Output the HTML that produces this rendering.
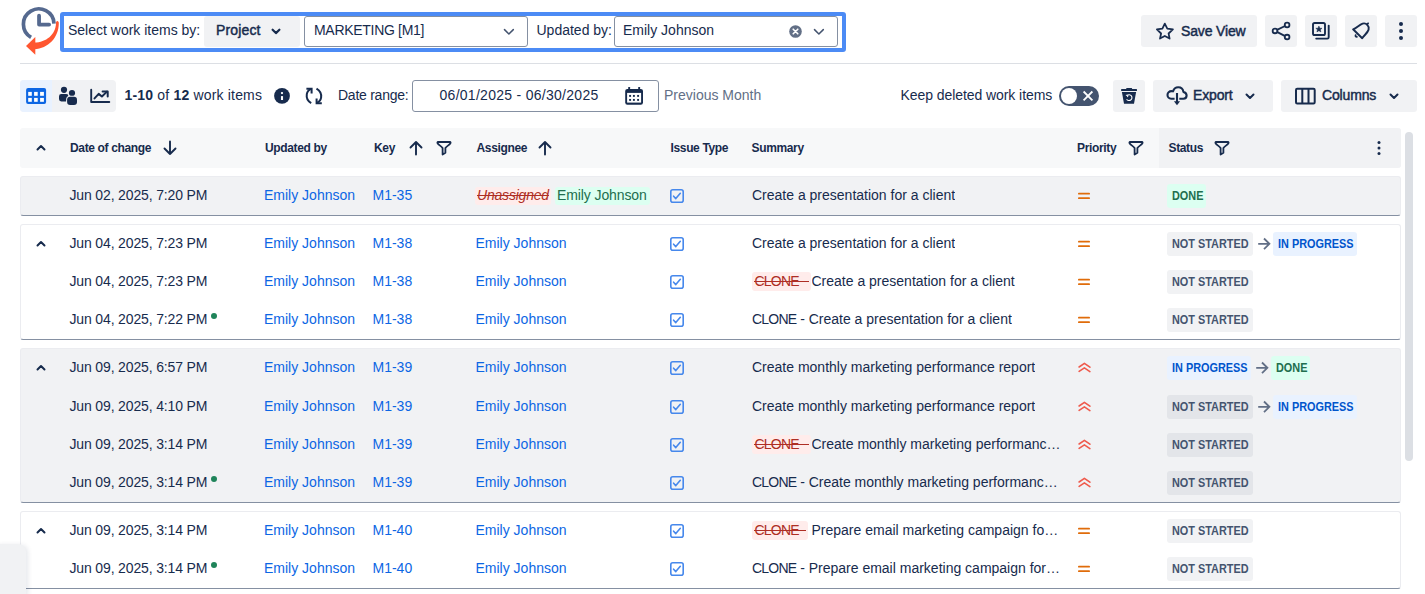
<!DOCTYPE html>
<html><head><meta charset="utf-8">
<style>
*{box-sizing:border-box;margin:0;padding:0}
html,body{width:1425px;height:594px;overflow:hidden;background:#fff}
body{font-family:"Liberation Sans",sans-serif;font-size:14px;color:#172b4d;position:relative}
.a{position:absolute}
.t{position:absolute;white-space:nowrap;line-height:38px;height:38px}
svg{position:absolute;overflow:visible}
.btn{position:absolute;background:#f1f2f4;border-radius:3px;height:32px}
.bold{font-weight:700}
.med{-webkit-text-stroke:0.45px currentColor;letter-spacing:-0.15px}
.lnk{color:#0c66e4}
.grp{position:absolute;left:20px;width:1381px;border:1px solid #ebecf0;border-bottom:1px solid #8590a2;border-radius:3px}
.gray{background:#f1f2f4}
.row{position:absolute;left:0;width:1381px;height:38px}
.loz{position:absolute;height:24px;line-height:24px;border-radius:3px;font-size:12.5px;font-weight:700;white-space:nowrap;overflow:visible}
.loz span{position:absolute;left:4.5px;top:0;transform:scaleX(0.87);transform-origin:0 0}
.ns{background:rgba(9,30,66,0.06);color:#44546f}
.ip{background:#e9f2ff;color:#0055cc}
.dn{background:#dcfff1;color:#216e4e}
.hdr{font-size:12px;font-weight:700;letter-spacing:-0.35px;line-height:40px;height:40px}
</style></head><body>

<!-- logo -->
<svg class="a" style="left:0;top:0" width="70" height="60" viewBox="0 0 70 60">
  <path d="M31.05 37.45 A15.3 15.3 0 1 1 54 23.6" fill="none" stroke="#55698f" stroke-width="3.7"/>
  <path d="M39.05 15.7 V24.55 H49.1" fill="none" stroke="#55698f" stroke-width="3.8" stroke-linecap="round" stroke-linejoin="round"/>
  <path d="M57.3 21 C58.3 21 58.8 22 58.8 23 C58.8 38 48 48.5 34.5 49.2 L34.5 42.6 C46 42.2 55.8 35 56 23 C56 22 56.4 21 57.3 21 Z" fill="#ff5630"/>
  <path d="M26 46 L35.3 37.1 L35.3 54.8 Z" fill="#ff5630"/>
</svg>

<!-- filter bar -->
<div class="a" style="left:60px;top:12px;width:786px;height:40px;border:4px solid #4c8bf5;border-radius:3px"></div>
<div class="t" style="left:68px;top:11px">Select work items by:</div>
<div class="btn" style="left:204px;top:16px;width:96px;height:30.5px"></div>
<div class="t med" style="left:216px;top:11px;letter-spacing:0.15px">Project</div>
<svg style="left:271px;top:28px" width="10" height="8"><path d="M1.6 1.7 L4.9 5.1 L8.4 1.7" fill="none" stroke="#172b4d" stroke-width="2.2" stroke-linecap="round" stroke-linejoin="round"/></svg>
<div class="a" style="left:304px;top:16px;width:224px;height:31px;border:1px solid #8590a2;border-radius:3px"></div>
<div class="t" style="left:314px;top:11px;letter-spacing:-0.3px">MARKETING [M1]</div>
<svg style="left:504px;top:27px" width="12" height="9"><path d="M0.5 2.6 L4.9 7 L9.3 2.6" fill="none" stroke="#44546f" stroke-width="1.5" stroke-linecap="round" stroke-linejoin="round"/></svg>
<div class="t" style="left:536.5px;top:11px">Updated by:</div>
<div class="a" style="left:614px;top:16px;width:224px;height:31px;border:1px solid #8590a2;border-radius:3px"></div>
<div class="t" style="left:623px;top:11px">Emily Johnson</div>
<svg style="left:788.5px;top:24.5px" width="13" height="13" viewBox="0 0 13 13"><circle cx="6.5" cy="6.5" r="6.3" fill="#626f86"/><path d="M4.2 4.2 L8.8 8.8 M8.8 4.2 L4.2 8.8" stroke="#fff" stroke-width="1.6" stroke-linecap="round"/></svg>
<svg style="left:813.5px;top:27px" width="12" height="9"><path d="M0.5 2.6 L4.9 7 L9.3 2.6" fill="none" stroke="#44546f" stroke-width="1.5" stroke-linecap="round" stroke-linejoin="round"/></svg>

<!-- top-right buttons -->
<div class="btn" style="left:1141px;top:15px;width:116px"></div>
<svg style="left:1155px;top:21px" width="20" height="20" viewBox="0 0 20 20"><path d="M9.8 2.6 L12.3 7.6 L17.9 8.4 L13.6 12.5 L14.6 17.6 L9.8 15 L5 17.6 L6.1 12.5 L1.9 8.4 L7.4 7.6 Z" fill="none" stroke="#172b4d" stroke-width="1.75" stroke-linejoin="round"/></svg>
<div class="t med" style="left:1181px;top:11.5px">Save View</div>
<div class="btn" style="left:1265px;top:15px;width:32px"></div>
<svg style="left:1270px;top:20px" width="22" height="22" viewBox="0 0 22 22"><path d="M5 10.9 L17.1 5 M5 10.9 L17.1 17.1" stroke="#172b4d" stroke-width="1.8"/><circle cx="5" cy="10.9" r="2.35" fill="#f1f2f4" stroke="#172b4d" stroke-width="1.8"/><circle cx="17.1" cy="5" r="2.35" fill="#f1f2f4" stroke="#172b4d" stroke-width="1.8"/><circle cx="17.1" cy="17.1" r="2.35" fill="#f1f2f4" stroke="#172b4d" stroke-width="1.8"/></svg>
<div class="btn" style="left:1305px;top:15px;width:32px"></div>
<svg style="left:1310px;top:20px" width="22" height="22" viewBox="0 0 22 22"><rect x="3" y="3" width="12" height="12" rx="1.6" fill="none" stroke="#172b4d" stroke-width="1.9"/><path d="M18.7 5.6 V17.2 Q18.7 18.6 17.3 18.6 H6.2" fill="none" stroke="#172b4d" stroke-width="1.9" stroke-linecap="round"/><path d="M8.9 6.1 L9.8 8.2 L12 8.3 L10.3 9.7 L10.9 11.9 L8.9 10.7 L6.9 11.9 L7.5 9.7 L5.8 8.3 L8 8.2 Z" fill="#172b4d" stroke="#172b4d" stroke-width="0.5" stroke-linejoin="round"/></svg>
<div class="btn" style="left:1345px;top:15px;width:32px"></div>
<svg style="left:1350px;top:20px" width="22" height="22" viewBox="0 0 22 22"><path d="M3.1 9.3 C6.5 8.2 9.3 4.6 12.6 3.6 C14.4 3.1 16.2 3.7 17.3 4.9 C18.5 6.1 19 7.8 18.6 9.6 C17.6 12.9 14 15.4 12.2 18.3 Z" fill="none" stroke="#172b4d" stroke-width="1.9" stroke-linejoin="round"/><path d="M17 4.4 L18.1 3.3" stroke="#172b4d" stroke-width="1.8" stroke-linecap="round"/><path d="M5.6 15.2 Q5.2 17 6.9 16.9" fill="none" stroke="#172b4d" stroke-width="1.8" stroke-linecap="round"/></svg>
<div class="btn" style="left:1385px;top:15px;width:32px"></div>
<svg style="left:1385px;top:15px" width="32" height="32"><circle cx="16" cy="8.9" r="2" fill="#172b4d"/><circle cx="16" cy="15.9" r="2" fill="#172b4d"/><circle cx="16" cy="22.9" r="2" fill="#172b4d"/></svg>

<div class="a" style="left:20px;top:63px;width:1397px;height:1px;background:#dcdfe4"></div>

<!-- toolbar -->
<div class="btn" style="left:20px;top:80px;width:96px;border-radius:4px"></div>
<div class="a" style="left:20px;top:80px;width:32px;height:32px;background:#e9f2ff;border-radius:4px 0 0 4px"></div>
<svg style="left:26px;top:88px" width="21" height="16" viewBox="0 0 21 16"><rect x="0.1" y="0.1" width="20" height="15.8" rx="2" fill="#0c66e4"/><g fill="#fff"><rect x="2.2" y="3.9" width="3.6" height="3.9"/><rect x="8.1" y="3.9" width="3.6" height="3.9"/><rect x="14.1" y="3.9" width="3.8" height="3.9"/><rect x="2.2" y="9.9" width="3.6" height="3.9"/><rect x="8.1" y="9.9" width="3.6" height="3.9"/><rect x="14.1" y="9.9" width="3.8" height="3.9"/></g></svg>
<svg style="left:58px;top:86px" width="20" height="20" viewBox="0 0 20 20"><circle cx="6" cy="3.8" r="3.1" fill="#172b4d"/><rect x="1" y="8" width="9.5" height="7.4" rx="2.3" fill="#172b4d"/><circle cx="14" cy="7" r="3.1" fill="#172b4d" stroke="#f1f2f4" stroke-width="2" paint-order="stroke"/><rect x="9.1" y="10.8" width="9.9" height="8.1" rx="3" fill="#172b4d" stroke="#f1f2f4" stroke-width="2" paint-order="stroke"/></svg>
<svg style="left:88px;top:86px" width="24" height="20" viewBox="0 0 24 20"><path d="M3.2 3.7 V16 H21.3" fill="none" stroke="#172b4d" stroke-width="1.9" stroke-linecap="round" stroke-linejoin="round"/><path d="M6.5 12.4 L10.7 7.9 L13.9 10.5 L19 5.6" fill="none" stroke="#172b4d" stroke-width="2" stroke-linecap="round" stroke-linejoin="round"/><path d="M14.6 5.6 H19.7 V10.5" fill="none" stroke="#172b4d" stroke-width="2" stroke-linecap="round" stroke-linejoin="round"/></svg>
<div class="t" style="left:124.5px;top:76px;letter-spacing:0.18px"><b>1-10</b> of <b>12</b> work items</div>
<svg style="left:274px;top:88px" width="16" height="16" viewBox="0 0 16 16"><circle cx="8" cy="7.9" r="7.9" fill="#172b4d"/><circle cx="8" cy="5.1" r="1.15" fill="#fff"/><rect x="6.95" y="8.1" width="2.1" height="3.9" fill="#fff"/></svg>
<svg style="left:304px;top:86px" width="20" height="20" viewBox="0 0 20 20"><g fill="none" stroke="#172b4d" stroke-width="2"><path d="M7.2 17.2 C3.8 15.2 2.3 11.5 2.8 8.2 C3.2 5.8 4.8 3.8 7.3 2.9"/><path d="M2.4 2.8 H7.6 V7.6"/><path d="M12.5 2.6 C15.9 4.6 17.6 8.3 17.1 11.6 C16.7 14 15.1 16 12.6 16.9"/><path d="M17.8 17.3 H12.6 V12.4"/></g></svg>
<div class="t" style="left:338px;top:76px;letter-spacing:-0.25px">Date range:</div>
<div class="a" style="left:412px;top:80px;width:247px;height:32px;border:1px solid #8590a2;border-radius:3px"></div>
<div class="t" style="left:439.5px;top:76px;letter-spacing:0.28px">06/01/2025 - 06/30/2025</div>
<svg style="left:625px;top:86px" width="19" height="20" viewBox="0 0 19 20"><rect x="0.2" y="2.9" width="17.8" height="15.9" rx="2.2" fill="#172b4d"/><rect x="3.2" y="1" width="1.9" height="3" rx="0.5" fill="#172b4d"/><rect x="13.2" y="1" width="1.9" height="3" rx="0.5" fill="#172b4d"/><rect x="2.1" y="6.9" width="14" height="9.7" fill="#fff"/><g fill="#172b4d"><rect x="4.15" y="8.95" width="1.9" height="1.9"/><rect x="7.95" y="8.95" width="1.9" height="1.9"/><rect x="12.15" y="8.95" width="1.9" height="1.9"/><rect x="4.15" y="12.95" width="1.9" height="1.9"/><rect x="7.95" y="12.95" width="1.9" height="1.9"/><rect x="12.15" y="12.95" width="1.9" height="1.9"/></g></svg>
<div class="t" style="left:664px;top:76px;color:#626f86">Previous Month</div>

<div class="t" style="left:900.5px;top:76px;letter-spacing:-0.07px">Keep deleted work items</div>
<div class="a" style="left:1059px;top:86px;width:40px;height:20px;border-radius:10px;background:#44546f"></div>
<div class="a" style="left:1061px;top:88px;width:16px;height:16px;border-radius:8px;background:#fff"></div>
<svg style="left:1082px;top:90px" width="12" height="12"><path d="M1.6 1.5 L10.4 10.4 M10.4 1.5 L1.6 10.4" stroke="#fff" stroke-width="1.8"/></svg>
<div class="btn" style="left:1113px;top:80px;width:32px"></div>
<svg style="left:1119px;top:86px" width="20" height="20" viewBox="0 0 20 20"><rect x="2.1" y="2.9" width="15.9" height="2" rx="0.5" fill="#172b4d"/><rect x="7.2" y="2" width="5.9" height="1.5" rx="0.4" fill="#172b4d"/><path d="M2.9 6.1 H17.1 L15 17.7 H5 Z" fill="#172b4d"/><path d="M8.2 9.4 A2.9 2.9 0 1 1 7.6 13.2" fill="none" stroke="#fff" stroke-width="1.1"/><path d="M6.9 9.3 L8.8 9.3 L8.6 11.1" fill="none" stroke="#fff" stroke-width="1"/></svg>
<div class="btn" style="left:1153px;top:80px;width:120px"></div>
<svg style="left:1163px;top:82px" width="28" height="28" viewBox="0 0 28 28"><path d="M11.6 16.7 H8.2 C6 16.7 4.5 15 4.5 13 C4.5 10.8 6.3 9.1 8.5 9.1 C9 9.1 9.6 9.2 10 9.4 C10.8 6.9 12.8 5.3 15.2 5.3 C18 5.3 20.1 7.3 20.4 10 C22.2 10.4 23.6 11.8 23.6 13.5 C23.6 15.3 22.2 16.7 20.4 16.7 H16.3" fill="none" stroke="#172b4d" stroke-width="2.1" stroke-linejoin="round"/><path d="M14 11 V20" stroke="#172b4d" stroke-width="2.1"/><path d="M10.9 19.3 H17.1 L14 23.2 Z" fill="#172b4d"/></svg>
<div class="t med" style="left:1193px;top:76px">Export</div>
<svg style="left:1244.5px;top:93px" width="10" height="8"><path d="M1.5 1.5 L5 5 L8.5 1.5" fill="none" stroke="#172b4d" stroke-width="2" stroke-linecap="round" stroke-linejoin="round"/></svg>
<div class="btn" style="left:1281px;top:80px;width:136px"></div>
<svg style="left:1295px;top:87px" width="21" height="18" viewBox="0 0 21 18"><rect x="1" y="1.8" width="18.7" height="14.7" rx="1.2" fill="none" stroke="#172b4d" stroke-width="2"/><path d="M7.3 1.8 V16.5 M13.5 1.8 V16.5" stroke="#172b4d" stroke-width="2"/></svg>
<div class="t med" style="left:1322px;top:76px">Columns</div>
<svg style="left:1388.5px;top:93px" width="10" height="8"><path d="M1.5 1.5 L5 5 L8.5 1.5" fill="none" stroke="#172b4d" stroke-width="2" stroke-linecap="round" stroke-linejoin="round"/></svg>

<!-- TABLE HEADER -->
<div class="a" style="left:20px;top:128px;width:1381px;height:40px;background:#f7f8f9;border-radius:3px"></div>
<div class="a" style="left:1159px;top:128px;width:242px;height:40px;background:#f1f2f4;border-radius:0 3px 3px 0"></div>
<svg style="left:36px;top:144px" width="10" height="8"><path d="M1.5 5.5 L5 2 L8.5 5.5" fill="none" stroke="#172b4d" stroke-width="2" stroke-linecap="round" stroke-linejoin="round"/></svg>
<div class="t hdr" style="left:70px;top:128px">Date of change</div>
<svg style="left:162px;top:140px" width="16" height="16" viewBox="0 0 16 16"><path d="M8 1.5 V14 M2.5 8.5 L8 14 L13.5 8.5" fill="none" stroke="#172b4d" stroke-width="1.9" stroke-linecap="round" stroke-linejoin="round"/></svg>
<div class="t hdr" style="left:265px;top:128px">Updated by</div>
<div class="t hdr" style="left:374px;top:128px">Key</div>
<svg style="left:408px;top:140px" width="16" height="16" viewBox="0 0 16 16"><path d="M8 14.5 V2 M2.5 7.5 L8 2 L13.5 7.5" fill="none" stroke="#172b4d" stroke-width="1.9" stroke-linecap="round" stroke-linejoin="round"/></svg>
<svg style="left:436px;top:140px" width="16" height="16" viewBox="0 0 16 16"><path d="M2 2 H14 C14.6 2 14.8 2.7 14.4 3.3 C13.4 5 10.6 6.2 9.4 8 V12.7 L6.6 14.5 V8 C5.4 6.2 2.6 5 1.6 3.3 C1.2 2.7 1.4 2 2 2 Z" fill="none" stroke="#172b4d" stroke-width="1.8" stroke-linejoin="round"/></svg>
<div class="t hdr" style="left:476.5px;top:128px">Assignee</div>
<svg style="left:537px;top:140px" width="16" height="16" viewBox="0 0 16 16"><path d="M8 14.5 V2 M2.5 7.5 L8 2 L13.5 7.5" fill="none" stroke="#172b4d" stroke-width="1.9" stroke-linecap="round" stroke-linejoin="round"/></svg>
<div class="t hdr" style="left:670.5px;top:128px">Issue Type</div>
<div class="t hdr" style="left:751.5px;top:128px">Summary</div>
<div class="t hdr" style="left:1077px;top:128px">Priority</div>
<svg style="left:1128px;top:140px" width="16" height="16" viewBox="0 0 16 16"><path d="M2 2 H14 C14.6 2 14.8 2.7 14.4 3.3 C13.4 5 10.6 6.2 9.4 8 V12.7 L6.6 14.5 V8 C5.4 6.2 2.6 5 1.6 3.3 C1.2 2.7 1.4 2 2 2 Z" fill="none" stroke="#172b4d" stroke-width="1.8" stroke-linejoin="round"/></svg>
<div class="t hdr" style="left:1168.5px;top:128px">Status</div>
<svg style="left:1214px;top:140px" width="16" height="16" viewBox="0 0 16 16"><path d="M2 2 H14 C14.6 2 14.8 2.7 14.4 3.3 C13.4 5 10.6 6.2 9.4 8 V12.7 L6.6 14.5 V8 C5.4 6.2 2.6 5 1.6 3.3 C1.2 2.7 1.4 2 2 2 Z" fill="none" stroke="#172b4d" stroke-width="1.8" stroke-linejoin="round"/></svg>
<svg style="left:1369px;top:138px" width="20" height="20"><circle cx="10" cy="4.5" r="1.5" fill="#172b4d"/><circle cx="10" cy="10" r="1.5" fill="#172b4d"/><circle cx="10" cy="15.5" r="1.5" fill="#172b4d"/></svg>

<!-- scrollbar -->
<div class="a" style="left:1405px;top:132px;width:8px;height:329px;border-radius:4px;background:#dcdfe4"></div>

<!-- GROUPS -->
<div class="grp gray" style="top:176px;height:40px"></div>
<div class="grp" style="top:224px;height:116px"></div>
<div class="grp gray" style="top:348px;height:155px"></div>
<div class="grp" style="top:511px;height:78px"></div>

<div class="t" style="left:69.5px;top:176px;letter-spacing:-0.15px">Jun 02, 2025, 7:20 PM</div>
<div class="t lnk" style="left:264px;top:176px">Emily Johnson</div>
<div class="t lnk" style="left:372.5px;top:176px">M1-35</div>
<div class="a" style="left:475px;top:187px;width:76px;height:18px;background:#ffeceb;border-radius:3px"></div>
<div class="t" style="left:477px;top:176px;color:#ae2e24;font-style:italic;text-decoration:line-through;text-decoration-thickness:1.3px;letter-spacing:-0.2px">Unassigned</div>
<div class="a" style="left:555px;top:187px;width:95px;height:18px;background:#dcfff1;border-radius:3px"></div>
<div class="t" style="left:557px;top:176px;color:#216e4e;letter-spacing:-0.1px">Emily Johnson</div>
<svg style="left:670px;top:189px" width="14" height="14" viewBox="0 0 14 14"><rect x="0.8" y="0.8" width="12.4" height="12.4" rx="2" fill="none" stroke="#4688ec" stroke-width="1.6"/><path d="M3.6 7.2 L5.8 9.6 L10.3 4.3" fill="none" stroke="#4688ec" stroke-width="1.6" stroke-linecap="round" stroke-linejoin="round"/></svg>
<div class="t" style="left:752px;top:176px;max-width:309px;overflow:hidden;text-overflow:ellipsis">Create a presentation for a client</div>
<svg style="left:1077px;top:191px" width="14" height="10"><rect x="1" y="1.85" width="12" height="1.7" rx="0.85" fill="#e06c0a"/><rect x="1" y="6.35" width="12" height="1.7" rx="0.85" fill="#e06c0a"/></svg>
<div class="loz dn" style="left:1167px;top:184px;width:39px"><span>DONE</span></div>
<svg style="left:36px;top:239.5px" width="10" height="8"><path d="M1.5 5.5 L5 2 L8.5 5.5" fill="none" stroke="#172b4d" stroke-width="2" stroke-linecap="round" stroke-linejoin="round"/></svg>
<div class="t" style="left:69.5px;top:224px;letter-spacing:-0.15px">Jun 04, 2025, 7:23 PM</div>
<div class="t lnk" style="left:264px;top:224px">Emily Johnson</div>
<div class="t lnk" style="left:372.5px;top:224px">M1-38</div>
<div class="t lnk" style="left:475.5px;top:224px">Emily Johnson</div>
<svg style="left:670px;top:237px" width="14" height="14" viewBox="0 0 14 14"><rect x="0.8" y="0.8" width="12.4" height="12.4" rx="2" fill="none" stroke="#4688ec" stroke-width="1.6"/><path d="M3.6 7.2 L5.8 9.6 L10.3 4.3" fill="none" stroke="#4688ec" stroke-width="1.6" stroke-linecap="round" stroke-linejoin="round"/></svg>
<div class="t" style="left:752px;top:224px;max-width:309px;overflow:hidden;text-overflow:ellipsis">Create a presentation for a client</div>
<svg style="left:1077px;top:239px" width="14" height="10"><rect x="1" y="1.85" width="12" height="1.7" rx="0.85" fill="#e06c0a"/><rect x="1" y="6.35" width="12" height="1.7" rx="0.85" fill="#e06c0a"/></svg>
<div class="loz ns" style="left:1167px;top:232px;width:86px"><span>NOT STARTED</span></div>
<svg style="left:1256.5px;top:238px" width="14" height="12" viewBox="0 0 14 12"><path d="M1.2 5.8 H12.4 M7 0.5 L12.4 5.8 L7 11.1" fill="none" stroke="#626f86" stroke-width="1.8" stroke-linejoin="miter"/></svg>
<div class="loz ip" style="left:1273px;top:232px;width:84px"><span>IN PROGRESS</span></div>
<div class="t" style="left:69.5px;top:262px;letter-spacing:-0.15px">Jun 04, 2025, 7:23 PM</div>
<div class="t lnk" style="left:264px;top:262px">Emily Johnson</div>
<div class="t lnk" style="left:372.5px;top:262px">M1-38</div>
<div class="t lnk" style="left:475.5px;top:262px">Emily Johnson</div>
<svg style="left:670px;top:275px" width="14" height="14" viewBox="0 0 14 14"><rect x="0.8" y="0.8" width="12.4" height="12.4" rx="2" fill="none" stroke="#4688ec" stroke-width="1.6"/><path d="M3.6 7.2 L5.8 9.6 L10.3 4.3" fill="none" stroke="#4688ec" stroke-width="1.6" stroke-linecap="round" stroke-linejoin="round"/></svg>
<div class="a" style="left:752px;top:272px;width:59px;height:19px;background:#ffeceb;border-radius:3px"></div>
<div class="t" style="left:754.5px;top:262px;color:#ae2e24;letter-spacing:-0.8px">CLONE</div>
<div class="a" style="left:754px;top:281px;width:55px;height:1.3px;background:#ae2e24"></div>
<div class="t" style="left:811.5px;top:262px;width:249px;overflow:hidden;text-overflow:ellipsis">Create a presentation for a client</div>
<svg style="left:1077px;top:277px" width="14" height="10"><rect x="1" y="1.85" width="12" height="1.7" rx="0.85" fill="#e06c0a"/><rect x="1" y="6.35" width="12" height="1.7" rx="0.85" fill="#e06c0a"/></svg>
<div class="loz ns" style="left:1167px;top:270px;width:86px"><span>NOT STARTED</span></div>
<div class="t" style="left:69.5px;top:300px;letter-spacing:-0.15px">Jun 04, 2025, 7:22 PM</div>
<div class="a" style="left:210.9px;top:312.8px;width:6px;height:6px;border-radius:3px;background:#1f845a"></div>
<div class="t lnk" style="left:264px;top:300px">Emily Johnson</div>
<div class="t lnk" style="left:372.5px;top:300px">M1-38</div>
<div class="t lnk" style="left:475.5px;top:300px">Emily Johnson</div>
<svg style="left:670px;top:313px" width="14" height="14" viewBox="0 0 14 14"><rect x="0.8" y="0.8" width="12.4" height="12.4" rx="2" fill="none" stroke="#4688ec" stroke-width="1.6"/><path d="M3.6 7.2 L5.8 9.6 L10.3 4.3" fill="none" stroke="#4688ec" stroke-width="1.6" stroke-linecap="round" stroke-linejoin="round"/></svg>
<div class="t" style="left:752px;top:300px;max-width:309px;overflow:hidden;text-overflow:ellipsis"><span style="letter-spacing:-0.8px">CLONE</span> - Create a presentation for a client</div>
<svg style="left:1077px;top:315px" width="14" height="10"><rect x="1" y="1.85" width="12" height="1.7" rx="0.85" fill="#e06c0a"/><rect x="1" y="6.35" width="12" height="1.7" rx="0.85" fill="#e06c0a"/></svg>
<div class="loz ns" style="left:1167px;top:308px;width:86px"><span>NOT STARTED</span></div>
<svg style="left:36px;top:363.5px" width="10" height="8"><path d="M1.5 5.5 L5 2 L8.5 5.5" fill="none" stroke="#172b4d" stroke-width="2" stroke-linecap="round" stroke-linejoin="round"/></svg>
<div class="t" style="left:69.5px;top:348px;letter-spacing:-0.15px">Jun 09, 2025, 6:57 PM</div>
<div class="t lnk" style="left:264px;top:348px">Emily Johnson</div>
<div class="t lnk" style="left:372.5px;top:348px">M1-39</div>
<div class="t lnk" style="left:475.5px;top:348px">Emily Johnson</div>
<svg style="left:670px;top:361px" width="14" height="14" viewBox="0 0 14 14"><rect x="0.8" y="0.8" width="12.4" height="12.4" rx="2" fill="none" stroke="#4688ec" stroke-width="1.6"/><path d="M3.6 7.2 L5.8 9.6 L10.3 4.3" fill="none" stroke="#4688ec" stroke-width="1.6" stroke-linecap="round" stroke-linejoin="round"/></svg>
<div class="t" style="left:752px;top:348px;max-width:309px;overflow:hidden;text-overflow:ellipsis">Create monthly marketing performance report</div>
<svg style="left:1077.5px;top:360px" width="13" height="14" viewBox="0 0 13 14"><path d="M1.1 7 L6.4 3.4 L11.9 7.2 M1.1 11.4 L6.4 7.9 L11.9 11.6" fill="none" stroke="#ef5a4c" stroke-width="1.6" stroke-linecap="round" stroke-linejoin="round"/></svg>
<div class="loz ip" style="left:1167px;top:356px;width:84px"><span>IN PROGRESS</span></div>
<svg style="left:1254.5px;top:362px" width="14" height="12" viewBox="0 0 14 12"><path d="M1.2 5.8 H12.4 M7 0.5 L12.4 5.8 L7 11.1" fill="none" stroke="#626f86" stroke-width="1.8" stroke-linejoin="miter"/></svg>
<div class="loz dn" style="left:1271px;top:356px;width:39px"><span>DONE</span></div>
<div class="t" style="left:69.5px;top:387px;letter-spacing:-0.15px">Jun 09, 2025, 4:10 PM</div>
<div class="t lnk" style="left:264px;top:387px">Emily Johnson</div>
<div class="t lnk" style="left:372.5px;top:387px">M1-39</div>
<div class="t lnk" style="left:475.5px;top:387px">Emily Johnson</div>
<svg style="left:670px;top:400px" width="14" height="14" viewBox="0 0 14 14"><rect x="0.8" y="0.8" width="12.4" height="12.4" rx="2" fill="none" stroke="#4688ec" stroke-width="1.6"/><path d="M3.6 7.2 L5.8 9.6 L10.3 4.3" fill="none" stroke="#4688ec" stroke-width="1.6" stroke-linecap="round" stroke-linejoin="round"/></svg>
<div class="t" style="left:752px;top:387px;max-width:309px;overflow:hidden;text-overflow:ellipsis">Create monthly marketing performance report</div>
<svg style="left:1077.5px;top:399px" width="13" height="14" viewBox="0 0 13 14"><path d="M1.1 7 L6.4 3.4 L11.9 7.2 M1.1 11.4 L6.4 7.9 L11.9 11.6" fill="none" stroke="#ef5a4c" stroke-width="1.6" stroke-linecap="round" stroke-linejoin="round"/></svg>
<div class="loz ns" style="left:1167px;top:395px;width:86px"><span>NOT STARTED</span></div>
<svg style="left:1256.5px;top:401px" width="14" height="12" viewBox="0 0 14 12"><path d="M1.2 5.8 H12.4 M7 0.5 L12.4 5.8 L7 11.1" fill="none" stroke="#626f86" stroke-width="1.8" stroke-linejoin="miter"/></svg>
<div class="loz ip" style="left:1273px;top:395px;width:84px"><span>IN PROGRESS</span></div>
<div class="t" style="left:69.5px;top:425px;letter-spacing:-0.15px">Jun 09, 2025, 3:14 PM</div>
<div class="t lnk" style="left:264px;top:425px">Emily Johnson</div>
<div class="t lnk" style="left:372.5px;top:425px">M1-39</div>
<div class="t lnk" style="left:475.5px;top:425px">Emily Johnson</div>
<svg style="left:670px;top:438px" width="14" height="14" viewBox="0 0 14 14"><rect x="0.8" y="0.8" width="12.4" height="12.4" rx="2" fill="none" stroke="#4688ec" stroke-width="1.6"/><path d="M3.6 7.2 L5.8 9.6 L10.3 4.3" fill="none" stroke="#4688ec" stroke-width="1.6" stroke-linecap="round" stroke-linejoin="round"/></svg>
<div class="a" style="left:752px;top:435px;width:59px;height:19px;background:#ffeceb;border-radius:3px"></div>
<div class="t" style="left:754.5px;top:425px;color:#ae2e24;letter-spacing:-0.8px">CLONE</div>
<div class="a" style="left:754px;top:444px;width:55px;height:1.3px;background:#ae2e24"></div>
<div class="t" style="left:811.5px;top:425px;width:249px;overflow:hidden;text-overflow:ellipsis">Create monthly marketing performance report</div>
<svg style="left:1077.5px;top:437px" width="13" height="14" viewBox="0 0 13 14"><path d="M1.1 7 L6.4 3.4 L11.9 7.2 M1.1 11.4 L6.4 7.9 L11.9 11.6" fill="none" stroke="#ef5a4c" stroke-width="1.6" stroke-linecap="round" stroke-linejoin="round"/></svg>
<div class="loz ns" style="left:1167px;top:433px;width:86px"><span>NOT STARTED</span></div>
<div class="t" style="left:69.5px;top:463px;letter-spacing:-0.15px">Jun 09, 2025, 3:14 PM</div>
<div class="a" style="left:210.9px;top:475.8px;width:6px;height:6px;border-radius:3px;background:#1f845a"></div>
<div class="t lnk" style="left:264px;top:463px">Emily Johnson</div>
<div class="t lnk" style="left:372.5px;top:463px">M1-39</div>
<div class="t lnk" style="left:475.5px;top:463px">Emily Johnson</div>
<svg style="left:670px;top:476px" width="14" height="14" viewBox="0 0 14 14"><rect x="0.8" y="0.8" width="12.4" height="12.4" rx="2" fill="none" stroke="#4688ec" stroke-width="1.6"/><path d="M3.6 7.2 L5.8 9.6 L10.3 4.3" fill="none" stroke="#4688ec" stroke-width="1.6" stroke-linecap="round" stroke-linejoin="round"/></svg>
<div class="t" style="left:752px;top:463px;max-width:309px;overflow:hidden;text-overflow:ellipsis"><span style="letter-spacing:-0.8px">CLONE</span> - Create monthly marketing performance report</div>
<svg style="left:1077.5px;top:475px" width="13" height="14" viewBox="0 0 13 14"><path d="M1.1 7 L6.4 3.4 L11.9 7.2 M1.1 11.4 L6.4 7.9 L11.9 11.6" fill="none" stroke="#ef5a4c" stroke-width="1.6" stroke-linecap="round" stroke-linejoin="round"/></svg>
<div class="loz ns" style="left:1167px;top:471px;width:86px"><span>NOT STARTED</span></div>
<svg style="left:36px;top:526.5px" width="10" height="8"><path d="M1.5 5.5 L5 2 L8.5 5.5" fill="none" stroke="#172b4d" stroke-width="2" stroke-linecap="round" stroke-linejoin="round"/></svg>
<div class="t" style="left:69.5px;top:511px;letter-spacing:-0.15px">Jun 09, 2025, 3:14 PM</div>
<div class="t lnk" style="left:264px;top:511px">Emily Johnson</div>
<div class="t lnk" style="left:372.5px;top:511px">M1-40</div>
<div class="t lnk" style="left:475.5px;top:511px">Emily Johnson</div>
<svg style="left:670px;top:524px" width="14" height="14" viewBox="0 0 14 14"><rect x="0.8" y="0.8" width="12.4" height="12.4" rx="2" fill="none" stroke="#4688ec" stroke-width="1.6"/><path d="M3.6 7.2 L5.8 9.6 L10.3 4.3" fill="none" stroke="#4688ec" stroke-width="1.6" stroke-linecap="round" stroke-linejoin="round"/></svg>
<div class="a" style="left:752px;top:521px;width:56px;height:19px;background:#ffeceb;border-radius:3px"></div>
<div class="t" style="left:754.5px;top:511px;color:#ae2e24;letter-spacing:-0.8px">CLONE</div>
<div class="a" style="left:754px;top:530px;width:52px;height:1.3px;background:#ae2e24"></div>
<div class="t" style="left:811.5px;top:511px;width:249px;overflow:hidden;text-overflow:ellipsis">Prepare email marketing campaign for product launch</div>
<svg style="left:1077px;top:526px" width="14" height="10"><rect x="1" y="1.85" width="12" height="1.7" rx="0.85" fill="#e06c0a"/><rect x="1" y="6.35" width="12" height="1.7" rx="0.85" fill="#e06c0a"/></svg>
<div class="loz ns" style="left:1167px;top:519px;width:86px"><span>NOT STARTED</span></div>
<div class="t" style="left:69.5px;top:549px;letter-spacing:-0.15px">Jun 09, 2025, 3:14 PM</div>
<div class="a" style="left:210.9px;top:561.8px;width:6px;height:6px;border-radius:3px;background:#1f845a"></div>
<div class="t lnk" style="left:264px;top:549px">Emily Johnson</div>
<div class="t lnk" style="left:372.5px;top:549px">M1-40</div>
<div class="t lnk" style="left:475.5px;top:549px">Emily Johnson</div>
<svg style="left:670px;top:562px" width="14" height="14" viewBox="0 0 14 14"><rect x="0.8" y="0.8" width="12.4" height="12.4" rx="2" fill="none" stroke="#4688ec" stroke-width="1.6"/><path d="M3.6 7.2 L5.8 9.6 L10.3 4.3" fill="none" stroke="#4688ec" stroke-width="1.6" stroke-linecap="round" stroke-linejoin="round"/></svg>
<div class="t" style="left:752px;top:549px;max-width:309px;overflow:hidden;text-overflow:ellipsis"><span style="letter-spacing:-0.8px">CLONE</span> - Prepare email marketing campaign for product launch</div>
<svg style="left:1077px;top:564px" width="14" height="10"><rect x="1" y="1.85" width="12" height="1.7" rx="0.85" fill="#e06c0a"/><rect x="1" y="6.35" width="12" height="1.7" rx="0.85" fill="#e06c0a"/></svg>
<div class="loz ns" style="left:1167px;top:557px;width:86px"><span>NOT STARTED</span></div>

<!-- bottom-left floating -->
<div class="a" style="left:-10px;top:544px;width:36px;height:60px;background:#f1f2f4;border-radius:8px;box-shadow:3px 0 5px -1px rgba(9,30,66,0.10)"></div>

</body></html>
